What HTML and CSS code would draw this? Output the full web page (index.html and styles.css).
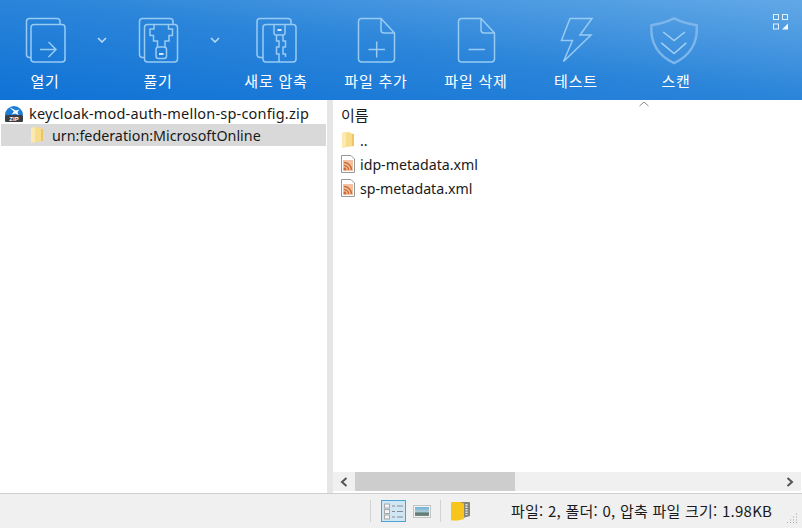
FILE: index.html
```html
<!DOCTYPE html>
<html lang="ko">
<head>
    <meta charset="UTF-8">
    <title>keycloak-mod-auth-mellon-sp-config.zip</title>
    <link rel="stylesheet" href="styles.css">
</head>
<body>

    <svg class="defs" width="0" height="0">
        <symbol id="folder" viewBox="0 0 14 18">
            <path d="M1 2 L8 1 L11 2.5 L13 3 V15 L5 16 L1 17 Z" fill="#f7dc8b"/>
            <path d="M1 2 L4 1 L5 3 V16 L1 17 Z" fill="#fbe9b0"/>
            <path d="M11 3 H13 V15 H11 Z" fill="#eec65f"/>
        </symbol>
        <symbol id="rss" viewBox="0 0 14 18">
            <path d="M.5 .5 H10 L13.5 4 V17.5 H.5 Z" fill="#fff" stroke="#979797"/>
            <rect x="2" y="5" width="10" height="11" fill="#f1c3a3"/>
            <circle cx="4" cy="14" r="1.4" fill="#cf6a32"/>
            <path d="M3 10.5 A4.5 4.5 0 0 1 7.5 15 M3 7.5 A7.5 7.5 0 0 1 10.5 15" fill="none" stroke="#cf6a32" stroke-width="1.5"/>
        </symbol>
    </svg>

    <!-- Toolbar -->
    <div class="toolbar">
        <div class="tool tool-open">
            <svg class="tool-icon" viewBox="15 15 60 50">
                <path d="M31 57.5 H29 A3 3 0 0 1 26.500 54.500 V21.500 A3 3 0 0 1 29.500 18.500 H57 A3 3 0 0 1 60 21.500 V24.500"/>
                <rect x="31" y="24.500" width="34" height="37.500" rx="3"/>
                <path d="M40 49.500 H56 M48.500 42 L56 49.500 L48.500 57"/>
            </svg>
            <span>열기</span>
        </div>
        <div class="drop">
            <svg width="10" height="6" viewBox="0 0 10 6"><path d="M1 1 L5 5 L9 1"/></svg>
        </div>
        <div class="tool tool-open">
            <svg class="tool-icon" viewBox="128 15 60 50">
                <path d="M144 57.500 H142 A3 3 0 0 1 139.500 54.500 V21.500 A3 3 0 0 1 142.500 18.500 H170 A3 3 0 0 1 173 21.500 V24.500"/>
                <rect x="144.500" y="24.500" width="33" height="37.500" rx="3"/>
                <path d="M154 24.500 V29 H150 V35.500 H153.500 V41 H157.500 V47 M168.500 24.500 V29 H172.500 V35.500 H169 V41 H165 V47"/>
                <rect x="156" y="47" width="10.500" height="11.500" rx="2.500"/>
                <path class="thick" d="M159 54 H163.500"/>
            </svg>
            <span>풀기</span>
        </div>
        <div class="drop">
            <svg width="10" height="6" viewBox="0 0 10 6"><path d="M1 1 L5 5 L9 1"/></svg>
        </div>
        <div class="tool">
            <svg class="tool-icon" viewBox="246 15 60 50">
                <path d="M263 57.500 H260 A3 3 0 0 1 257 54.500 V21.500 A3 3 0 0 1 260 18.500 H288 A3 3 0 0 1 291 21.500 V24.500"/>
                <rect x="263" y="24.500" width="33" height="37.500" rx="3"/>
                <path d="M274 24.500 V33 A2 2 0 0 0 276 35 H283 A2 2 0 0 0 285 33 V24.500"/>
                <path class="thick" d="M277.500 30 H281.500"/>
                <path d="M276.500 35 V41 H279 V47 H276.500 V54 H279 V62 M283 35 V41 H285.500 V47 H283 V54 H285.500 V57"/>
            </svg>
            <span>새로 압축</span>
        </div>
        <div class="tool">
            <svg class="tool-icon" viewBox="346 15 60 50">
                <path d="M361.500 18.500 H381 L394.500 33 V59 A3 3 0 0 1 391.500 62 H361.500 A3 3 0 0 1 358.500 59 V21.500 A3 3 0 0 1 361.500 18.500 Z M381 18.500 V30 A3 3 0 0 0 384 33 H394.500"/>
                <path d="M368.500 49.500 H385 M376.700 41.500 V57.500"/>
            </svg>
            <span>파일 추가</span>
        </div>
        <div class="tool">
            <svg class="tool-icon" viewBox="446 15 60 50">
                <path d="M461.500 18.500 H481 L494.500 33 V59 A3 3 0 0 1 491.500 62 H461.500 A3 3 0 0 1 458.500 59 V21.500 A3 3 0 0 1 461.500 18.500 Z M481 18.500 V30 A3 3 0 0 0 484 33 H494.500"/>
                <path d="M468.500 49.500 H485"/>
            </svg>
            <span>파일 삭제</span>
        </div>
        <div class="tool">
            <svg class="tool-icon" viewBox="546 15 60 50">
                <path d="M570 18.500 H592 L580 35 H591 L563.500 61.500 L572.500 40.500 H561.500 Z"/>
            </svg>
            <span>테스트</span>
        </div>
        <div class="tool">
            <svg class="tool-icon" viewBox="646 15 60 52">
                <path class="shield" d="M674 18.500 C682 22.500 690 24.500 697.500 25.500 C699 45 690 57.500 674 65 C658 57.500 649 45 650.500 25.500 C658 24.500 666 22.500 674 18.500 Z"/>
                <path class="shield-arrow" d="M662.700 32.700 L674 41.700 L685.300 32.700 M660.700 44 L674 55 L686.700 44"/>
            </svg>
            <span>스캔</span>
        </div>
        <svg class="layout-icon" width="16" height="16" viewBox="0 0 16 16">
            <rect x=".5" y=".5" width="5" height="5"/>
            <rect x="9.500" y=".5" width="5" height="5"/>
            <rect x=".5" y="10" width="5" height="5"/>
            <path class="fill" d="M15 9.500 V15.500 H9 Z"/>
        </svg>
    </div>

    <div class="main">
        <!-- Folder tree -->
        <div class="tree">
            <div class="tree-row">
                <svg class="zip-icon" width="18" height="18" viewBox="0 0 18 18">
                    <path d="M0 11 A9 9 0 0 1 18 11 Z" fill="#1c7ed6"/>
                    <path d="M4 3 L11 6.500 L14.500 5.500 L12.500 8 L13.500 11 L10 9.500 L6.500 10.500 L9 7.500 Z" fill="#fff"/>
                    <rect y="11" width="18" height="7" rx="1" fill="#3a3f47"/>
                    <text x="9" y="17" class="zip-label">ZIP</text>
                </svg>
                <span class="archive-name">keycloak-mod-auth-mellon-sp-config.zip</span>
            </div>
            <div class="tree-row tree-child selected">
                <svg class="file-icon" width="14" height="18"><use href="#folder"/></svg>
                <span class="folder-name">urn:federation:MicrosoftOnline</span>
            </div>
        </div>

        <div class="splitter"></div>

        <!-- File list -->
        <div class="files">
            <div class="list-head">
                <span>이름</span>
                <svg class="sort" width="10" height="6" viewBox="0 0 10 6"><path d="M.5 5 L5 1 L9.500 5"/></svg>
            </div>
            <div class="list">
                <div class="file-row">
                    <svg class="file-icon" width="14" height="18"><use href="#folder"/></svg>
                    <span>..</span>
                </div>
                <div class="file-row">
                    <svg class="file-icon" width="14" height="18"><use href="#rss"/></svg>
                    <span>idp-metadata.xml</span>
                </div>
                <div class="file-row">
                    <svg class="file-icon" width="14" height="18"><use href="#rss"/></svg>
                    <span>sp-metadata.xml</span>
                </div>
            </div>
            <div class="hscroll">
                <svg class="arrow" width="8" height="10" viewBox="0 0 8 10"><path d="M6.500 1 L2 5 L6.500 9"/></svg>
                <div class="track"><div class="thumb"></div></div>
                <svg class="arrow" width="8" height="10" viewBox="0 0 8 10"><path d="M1.500 1 L6 5 L1.500 9"/></svg>
            </div>
        </div>
    </div>

    <!-- Status bar -->
    <div class="status">
        <div class="sep"></div>
        <div class="view-btn active">
            <svg width="21" height="17" viewBox="0 0 21 17">
                <path class="lines" d="M9 3 H12 M14 3 H20 M9 8.500 H12 M14 8.500 H20 M9 14 H12 M14 14 H20"/>
                <rect x="1.500" y="1" width="5" height="4" class="box"/>
                <rect x="1.500" y="6.500" width="5" height="4" class="box"/>
                <rect x="1.500" y="12" width="5" height="4" class="box"/>
            </svg>
        </div>
        <div class="view-btn">
            <svg width="18" height="13" viewBox="0 0 18 13">
                <defs>
                    <linearGradient id="photo" x1="0" y1="0" x2="0" y2="1">
                        <stop offset="0" stop-color="#6fb3d6"/>
                        <stop offset=".5" stop-color="#a9c9d3"/>
                        <stop offset=".7" stop-color="#5d7a74"/>
                        <stop offset="1" stop-color="#76897f"/>
                    </linearGradient>
                </defs>
                <rect x=".5" y=".5" width="17" height="12" fill="#f4f4f4" stroke="#c2c2c2"/>
                <rect x="2" y="2" width="14" height="9" fill="url(#photo)"/>
            </svg>
        </div>
        <div class="sep"></div>
        <svg class="book" width="21" height="20" viewBox="0 0 21 20">
            <path d="M3 1 H19 Q20 1 20 2 V15 L13 17 V3 Z" fill="#85857c"/>
            <path d="M1 2 Q1 1 2 1 H10 L14 2.500 V18 L8 19.500 H2 Q1 19.500 1 18.500 Z" fill="#f8c51c"/>
            <path d="M16.500 3 V14" stroke="#e6e6e6" stroke-width="2" stroke-dasharray="1.500 1"/>
        </svg>
        <span class="status-text">파일: 2, 폴더: 0, 압축 파일 크기: 1.98KB</span>
        <svg class="grip" width="12" height="10" viewBox="0 0 12 10">
            <path d="M10 1 h1 M7 4 h1 M10 4 h1 M4 7 h1 M7 7 h1 M10 7 h1 M1 9.500 h1 M4 9.500 h1 M7 9.500 h1 M10 9.500 h1"/>
        </svg>
    </div>

</body>
</html>
```

FILE: styles.css
```css
body {
    margin: 0;
    width: 802px;
    height: 528px;
    display: flex;
    flex-direction: column;
    overflow: hidden;
    font-family: "Noto Sans", "Noto Sans CJK KR", sans-serif;
    font-size: 14px;
    color: #1a1a1a;
    background-color: #fff;
}
.defs {
    position: absolute;
}

/* toolbar */
.toolbar {
    height: 100px;
    flex: none;
    display: flex;
    background: linear-gradient(to bottom left, #62a8e6 0%, #2a84d9 50%, #0f72d6 100%);
    color: #fff;
}
.tool {
    width: 100px;
    display: flex;
    flex-direction: column;
    align-items: center;
    padding-top: 15px;
    box-sizing: border-box;
}
.tool-open {
    width: 90px;
}
.tool span {
    margin-top: 6px;
    font-family: "Noto Sans CJK KR", sans-serif;
    font-size: 15px;
    line-height: 20px;
    letter-spacing: 0.8px;
}
.tool-icon {
    width: 60px;
    height: 50px;
    overflow: visible;
    fill: none;
    stroke: #98cbf4;
    stroke-width: 1.5;
}
.tool-icon .thick {
    stroke: #d5e9fa;
    stroke-width: 2;
}
.tool-icon .shield {
    stroke: #7db6ea;
    stroke-width: 2.5;
}
.tool-icon .shield-arrow {
    stroke: #a6d0f3;
    stroke-width: 1.5;
}
.drop {
    width: 23px;
    padding-top: 37px;
    display: flex;
    justify-content: center;
    align-items: flex-start;
    box-sizing: border-box;
}
.drop svg path {
    fill: none;
    stroke: #bcdcf6;
    stroke-width: 1.5;
}
.layout-icon {
    margin: 14px 0 0 47px;
    fill: none;
    stroke: #e4f0fb;
}
.layout-icon .fill {
    fill: #f2f8fd;
    stroke: none;
}

/* panes */
.main {
    flex: 1;
    min-height: 0;
    display: flex;
}
.tree {
    width: 327px;
    flex: none;
    padding-top: 2px;
}
.tree-row {
    height: 22px;
    display: flex;
    align-items: center;
    padding-left: 5px;
    gap: 6px;
}
.archive-name {
    font-size: 14.5px;
    letter-spacing: 0.19px;
}
.folder-name {
    font-size: 14.3px;
}
.tree-child {
    margin: 0 1px 0 1px;
    padding-left: 29px;
    gap: 8px;
}
.selected {
    background-color: #d9d9d9;
}
.zip-label {
    font-family: "Liberation Sans", sans-serif;
    font-size: 6px;
    font-weight: bold;
    fill: #fff;
    text-anchor: middle;
}
.splitter {
    width: 6px;
    flex: none;
    background-color: #e6e6e6;
}
.files {
    flex: 1;
    min-width: 0;
    display: flex;
    flex-direction: column;
}
.list-head {
    height: 28px;
    display: flex;
    align-items: center;
    padding-left: 8px;
    position: relative;
    font-family: "Noto Sans CJK KR", sans-serif;
    font-size: 15px;
}
.sort {
    position: absolute;
    left: 306px;
    top: 1px;
    fill: none;
    stroke: #8a8a8a;
}
.list {
    flex: 1;
    font-size: 14.2px;
}
.file-row {
    height: 24px;
    display: flex;
    align-items: center;
    padding-left: 8px;
    gap: 5px;
}
.file-icon {
    flex: none;
}
.hscroll {
    height: 19px;
    margin: 0 1px 2px 0;
    display: flex;
    align-items: center;
    background-color: #f0f0f0;
}
.arrow {
    width: 22px;
    flex: none;
    fill: none;
    stroke: #555;
    stroke-width: 2;
}
.track {
    flex: 1;
    height: 100%;
}
.thumb {
    width: 160px;
    height: 100%;
    background-color: #cdcdcd;
}

/* status bar */
.status {
    height: 35px;
    flex: none;
    box-sizing: border-box;
    border-top: 1px solid #cfcfcf;
    background-color: #f0f0f0;
    display: flex;
    align-items: center;
    padding-left: 370px;
    position: relative;
}
.sep {
    width: 1px;
    height: 22px;
    background-color: #d2d2d2;
}
.view-btn {
    width: 25px;
    height: 22px;
    box-sizing: border-box;
    margin-left: 10px;
    display: flex;
    align-items: center;
    justify-content: center;
}
.view-btn + .view-btn {
    margin-left: 3px;
}
.view-btn + .sep {
    margin-left: 6px;
}
.view-btn.active {
    background-color: #cfe6f5;
    border: 1px solid #4aa3d0;
}
.lines {
    stroke: #8a8a8a;
    fill: none;
}
.box {
    fill: #f4f4f4;
    stroke: #a8a8a8;
}
.book {
    margin-left: 9px;
}
.status-text {
    margin-left: 40px;
    font-family: "Noto Sans CJK KR", sans-serif;
    font-size: 15px;
    letter-spacing: 0.25px;
    white-space: nowrap;
    position: relative;
    top: -1px;
}
.grip {
    position: absolute;
    right: 4px;
    bottom: 5px;
    stroke: #a5a5a5;
}
```
